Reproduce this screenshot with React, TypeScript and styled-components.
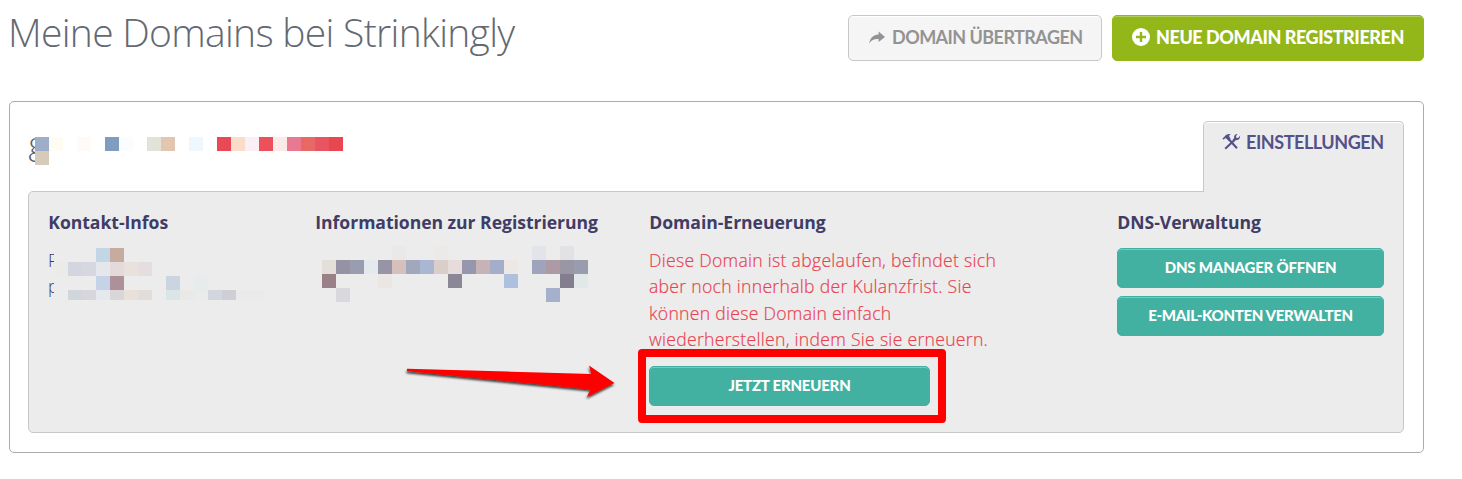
import React from 'react';
import styled, { createGlobalStyle } from 'styled-components';

const GlobalStyle = createGlobalStyle`
  *, *::before, *::after { box-sizing: border-box; }
  body {
    margin: 0;
    background: #fff;
    color: #3f3c66;
    font-family: 'Open Sans', sans-serif;
    font-size: 17.6px;
    overflow: hidden;
  }
`;

const Page = styled.main`
  width: 1424px;
  padding: 11px 0 0 9px;
`;

const Header = styled.header`
  display: flex;
  align-items: flex-start;
  justify-content: space-between;
  height: 90px;
`;

const Title = styled.h1`
  margin: -6px 0 0 -1px;
  font-size: 39px;
  line-height: 54px;
  font-weight: 300;
  letter-spacing: -0.7px;
  color: #636972;
  white-space: nowrap;
`;

const HeaderActions = styled.div`
  display: flex;
  gap: 10px;
  margin-top: 4px;
`;

const Label = styled.span<{ $spacing?: number }>`
  letter-spacing: ${(p) => p.$spacing ?? 0}px;
  white-space: nowrap;
`;

const HeaderButton = styled.button<{ $primary?: boolean }>`
  display: flex;
  align-items: center;
  gap: ${(p) => (p.$primary ? 6 : 7)}px;
  width: ${(p) => (p.$primary ? 312 : 254)}px;
  height: 46px;
  padding: 0 0 2px ${(p) => (p.$primary ? 19 : 20)}px;
  border: 1px solid ${(p) => (p.$primary ? '#93b719' : '#c8c8c8')};
  border-radius: 5px;
  background: ${(p) => (p.$primary ? '#93b719' : '#f5f5f5')};
  box-shadow: inset 0 1px 0 ${(p) => (p.$primary ? '#b3cc5e' : '#fff')};
  color: ${(p) => (p.$primary ? '#fff' : '#939393')};
  font: ${(p) => (p.$primary ? 900 : 700)} 18px/24px Lato, sans-serif;
`;

const Card = styled.section`
  height: 352px;
  padding: 19px 19px 0 18px;
  border: 1px solid #a9abaf;
  border-radius: 5px;
`;

const CardHead = styled.div`
  display: flex;
  justify-content: space-between;
  height: 70px;
`;

const DomainName = styled.div`
  position: relative;
  padding-top: 5px;
  width: 340px;
  font-size: 32px;
  line-height: 34px;
  font-weight: 300;
  text-indent: 0.5px;
  color: #56606e;
`;

const SettingsTab = styled.button`
  position: relative;
  z-index: 1;
  display: flex;
  align-items: flex-start;
  gap: 5px;
  width: 201px;
  height: 71px;
  padding: 8px 0 0 18px;
  border: 1px solid #c8c8c8;
  border-bottom: 0;
  border-radius: 5px 5px 0 0;
  background: #ececec;
  box-shadow: inset 0 1px 0 #fff;
  color: #54518a;
  font: 700 18px/24px Lato, sans-serif;
`;

const Panel = styled.div`
  display: grid;
  grid-template-columns: 267px 334px 468px 267px;
  height: 242px;
  padding: 17px 0 0 19px;
  border: 1px solid #c8c8c8;
  border-radius: 5px 0 5px 5px;
  background: #ececec;
`;

const Column = styled.div`
  position: relative;
  line-height: 26.4px;
`;

const ColumnTitle = styled.h2`
  margin: 0 0 12px;
  font-size: 17.6px;
  line-height: 26px;
  font-weight: 700;
  letter-spacing: -0.05px;
  text-indent: 0.3px;
  white-space: nowrap;
`;

const ContactLine = styled.div`
  font-weight: 300;
`;

const Notice = styled.p`
  margin: 0 0 13px;
  width: 360px;
  font-weight: 300;
  letter-spacing: 0.29px;
  -webkit-text-stroke: 0.2px #e8424f;
  color: #e8424f;
  white-space: nowrap;
`;

const ButtonStack = styled.div`
  display: grid;
  gap: 8px;
  padding-top: 1px;
`;

const TealButton = styled.button<{ $width: number }>`
  display: flex;
  align-items: center;
  justify-content: center;
  width: ${(p) => p.$width}px;
  height: 40px;
  padding: 0 0 2px;
  border: 1px solid #42b1a1;
  border-radius: 5px;
  background: #42b1a1;
  box-shadow: inset 0 1px 0 #7bc8bd;
  color: #fff;
  font: 900 15px/20px Lato, sans-serif;
`;

const Highlighted = styled.div`
  position: relative;
  width: 281px;
  height: 40px;
`;

const HighlightFrame = styled.div`
  position: absolute;
  left: -11px;
  top: -17px;
  width: 308px;
  height: 74px;
  border: 8px solid #f00;
  border-radius: 4px;
`;

const Arrow = styled.svg`
  position: absolute;
  left: -249px;
  top: -6px;
  overflow: visible;
`;

const MosaicGrid = styled.div<{ $x: number; $y: number; $cols: number; $rows: string; $cover: string }>`
  position: absolute;
  left: ${(p) => p.$x}px;
  top: ${(p) => p.$y}px;
  display: grid;
  grid-template-columns: repeat(${(p) => p.$cols}, 14px);
  grid-template-rows: ${(p) => p.$rows};
  background: ${(p) => p.$cover};
`;

const Cell = styled.i<{ $col: number; $row: number; $color: string }>`
  grid-column: ${(p) => p.$col + 1};
  grid-row: ${(p) => p.$row + 1};
  background: #${(p) => p.$color};
`;

type Block = [number, string];

const domainBlocks: Block[][] = [
  [[0, '9dadca'], [1, 'fffcf4'], [3, 'fffaf7'], [5, '7f9cc1'], [6, 'fbfcff'], [8, 'e2e3d8'], [9, 'e3c6b0'], [11, 'eff7ff'], [13, 'e94954'], [14, 'fadccb'], [15, 'faeff5'], [16, 'ec505a'], [17, 'fceae8'], [18, 'e87990'], [19, 'e76865'], [20, 'e8545f'], [21, 'e84752']],
  [[0, 'd6cabb']],
];

const contactBlocks: Block[][] = [
  [[3, 'c3d6e6'], [4, 'c7ab9f']],
  [[0, 'ebebea'], [1, 'd3d6df'], [2, 'd7d7e0'], [3, 'e5e7ed'], [4, 'e4dad9'], [5, 'e9e1db'], [6, 'e4dedf']],
  [[3, 'c4d3e8'], [4, 'ad909a'], [8, 'cbd5e1'], [10, 'e6ebeb']],
  [[0, 'ebeceb'], [1, 'd1d6dd'], [2, 'd6d6dc'], [3, 'e5e8ec'], [4, 'dad6d8'], [5, 'e9e1d9'], [6, 'e2ddda'], [8, 'dae5e6'], [9, 'ebe9e7'], [10, 'eaebeb'], [11, 'd2d7df'], [12, 'cfced5'], [13, 'ebeaea'], [14, 'ebeaea']],
];

const registrationBlocks: Block[][] = [
  [[5, 'ebe8e8'], [8, 'ebeae8'], [15, 'e3e4ea'], [17, 'e2e2e4']],
  [[0, 'e5dfda'], [1, '9593a3'], [2, '999daf'], [3, 'e3e9ed'], [4, '9794a5'], [5, 'd5c0bb'], [6, 'a2a8bb'], [7, 'a9b7d3'], [8, 'dacec8'], [9, 'e6dcd9'], [10, '9696ac'], [11, 'c6b3b6'], [12, 'a4aecb'], [13, 'ede8e4'], [15, '9ea4bb'], [16, 'ae9aa4'], [17, '9a96a4'], [18, '999bae']],
  [[0, '9a8087'], [4, 'ebe6e2'], [9, '8c8796'], [13, 'adc1df'], [17, '827d8f'], [18, 'e2e8e7']],
  [[1, 'd9d9dd'], [16, 'a5b1ca']],
];

type MosaicProps = { blocks: Block[][]; x: number; y: number; cols: number; rows: string; cover: string };

function Mosaic({ blocks, x, y, cols, rows, cover }: MosaicProps) {
  return (
    <MosaicGrid $x={x} $y={y} $cols={cols} $rows={rows} $cover={cover}>
      {blocks.map((line, row) =>
        line.map(([col, color]) => <Cell key={`${row}-${col}`} $col={col} $row={row} $color={color} />)
      )}
    </MosaicGrid>
  );
}

const ShareIcon = () => (
  <svg width="16" height="13" viewBox="0 0 16 13" fill="currentColor">
    <path d="M9.6 0.6 16 6.1 9.6 11V8.1C5.6 7.8 2.6 8.9.2 12.4.9 7.6 3.8 3.8 9.6 3.5Z" />
  </svg>
);

const PlusIcon = () => (
  <svg width="18" height="18" viewBox="0 0 18 18">
    <circle cx="9" cy="9" r="9" fill="#fff" />
    <path d="M9 4v10M4 9h10" stroke="#93b719" strokeWidth="2.4" />
  </svg>
);

const TabIcon = styled.svg`
  margin-top: 3px;
`;

const ToolsIcon = () => (
  <TabIcon width="19" height="18" viewBox="0 0 19 18" fill="none" stroke="currentColor">
    <path d="M6.8 6.2 15 15.3" strokeWidth="2.1" />
    <path d="M12 7.4 3.2 15.7" strokeWidth="2.1" />
    <path d="M.4 5.6 2.2 3.9C3.7 1.5 5.8.6 9 1.1 7.7 1.6 7 2.3 7.3 3.7L8.6 5.7 6.3 7.7 4.8 5.9C3.8 5 3 5.2 1.8 6.8Z" fill="currentColor" stroke="none" />
    <path d="M15.7 1C12.8 1 11.6 3 12.2 5.1L10.6 6.7 12.4 8.6 14 7.1C16.4 7.5 18.2 6 18.2 2.5L16.2 5 14.3 4.7 14 3Z" fill="currentColor" stroke="none" />
  </TabIcon>
);

export default function App() {
  return (
    <>
      <GlobalStyle />
      <Page>
        <Header>
          <Title>Meine Domains bei Strinkingly</Title>
          <HeaderActions>
            <HeaderButton>
              <ShareIcon />
              <Label $spacing={-0.55}>DOMAIN ÜBERTRAGEN</Label>
            </HeaderButton>
            <HeaderButton $primary>
              <PlusIcon />
              <Label $spacing={-0.44}>NEUE DOMAIN REGISTRIEREN</Label>
            </HeaderButton>
          </HeaderActions>
        </Header>
        <Card>
          <CardHead>
            <DomainName>
              g
              <Mosaic blocks={domainBlocks} x={7} y={16} cols={22} rows="14px 14px" cover="#fff" />
            </DomainName>
            <SettingsTab>
              <ToolsIcon />
              <Label $spacing={-0.45}>EINSTELLUNGEN</Label>
            </SettingsTab>
          </CardHead>
          <Panel>
            <Column>
              <ColumnTitle>Kontakt-Infos</ColumnTitle>
              <ContactLine>P</ContactLine>
              <ContactLine>p</ContactLine>
              <Mosaic blocks={contactBlocks} x={6} y={39} cols={15} rows="14px 14px 14px 10px" cover="#ececec" />
            </Column>
            <Column>
              <ColumnTitle>Informationen zur Registrierung</ColumnTitle>
              <Mosaic blocks={registrationBlocks} x={7} y={37} cols={19} rows="repeat(4, 14px)" cover="#ececec" />
            </Column>
            <Column>
              <ColumnTitle>Domain-Erneuerung</ColumnTitle>
              <Notice>
                Diese Domain ist abgelaufen, befindet sich
                <br />
                aber noch innerhalb der Kulanzfrist. Sie
                <br />
                können diese Domain einfach
                <br />
                wiederherstellen, indem Sie sie erneuern.
              </Notice>
              <Highlighted>
                <TealButton $width={281}>
                  <Label $spacing={-0.22}>JETZT ERNEUERN</Label>
                </TealButton>
                <HighlightFrame />
                <Arrow width="220" height="50" viewBox="400 360 220 50">
                  <defs>
                    <filter id="arrowShadow" x="-10%" y="-30%" width="120%" height="180%">
                      <feDropShadow dx="-0.5" dy="2" stdDeviation="1.3" floodColor="#000" floodOpacity="0.75" />
                    </filter>
                  </defs>
                  <path
                    d="M407 368.7 591.5 374 589 365.5 614.5 383 587 397 590.5 389.5 407 371.3Z"
                    fill="#f00"
                    filter="url(#arrowShadow)"
                  />
                </Arrow>
              </Highlighted>
            </Column>
            <Column>
              <ColumnTitle>DNS-Verwaltung</ColumnTitle>
              <ButtonStack>
                <TealButton $width={267}>
                  <Label $spacing={-0.2}>DNS MANAGER ÖFFNEN</Label>
                </TealButton>
                <TealButton $width={267}>
                  <Label $spacing={-0.33}>E-MAIL-KONTEN VERWALTEN</Label>
                </TealButton>
              </ButtonStack>
            </Column>
          </Panel>
        </Card>
      </Page>
    </>
  );
}
